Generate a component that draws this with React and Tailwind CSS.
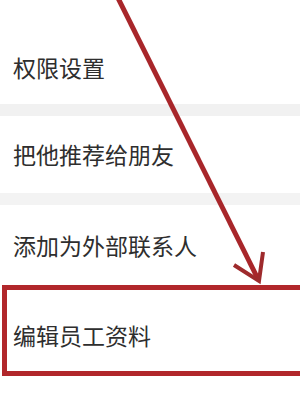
const font = { fontFamily: '"Noto Sans CJK SC", "Noto Sans", sans-serif' };

const Row = ({ className, children }) => (
  <div className={`flex items-center pl-[13px] text-[23px] text-[#2e2e2e] ${className}`}>
    {children}
  </div>
);

export default function App() {
  return (
    <div className="relative w-[300px] h-[400px] overflow-hidden bg-white" style={font}>
      <Row className="h-[104px] pt-[30px]">权限设置</Row>
      <div className="h-[12px] bg-[#f1f1f1]" />
      <Row className="h-[77px]">把他推荐给朋友</Row>
      <div className="h-[12px] bg-[#f3f3f3]" />
      <Row className="h-[80px]">添加为外部联系人</Row>

      {/* highlighted item */}
      <div className="ml-[2px] -mr-[20px] h-[91px] border-[5px] border-[#b1272b] flex items-center pt-[9px] pl-[6px] text-[23px] text-[#2e2e2e]">
        编辑员工资料
      </div>

      {/* annotation arrow */}
      <svg className="absolute inset-0 pointer-events-none" width="300" height="400" viewBox="0 0 300 400">
        <line x1="116" y1="-6" x2="258" y2="279" stroke="#a8262a" strokeWidth="5" />
        <polyline
          points="234,265 259,281 263,252"
          fill="none"
          stroke="#9e2a2c"
          strokeWidth="4"
          strokeLinejoin="miter"
        />
      </svg>
    </div>
  );
}
